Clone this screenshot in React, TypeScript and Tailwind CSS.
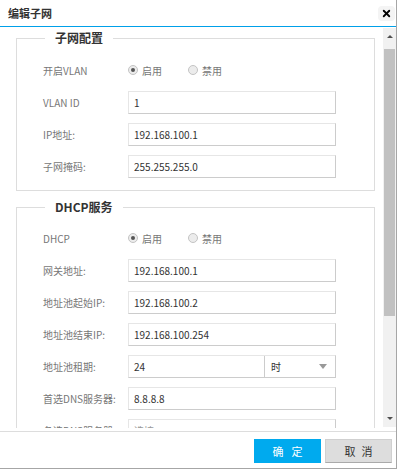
import React from 'react'
import { X } from 'lucide-react'

function Radio({ checked, label }: { checked?: boolean; label: string }) {
  return (
    <label className="inline-flex w-[60px] items-center gap-[4px] text-[#777]">
      <span className="flex h-[10px] w-[10px] items-center justify-center rounded-full border border-[#c4c4c4] bg-[#ececec]">
        {checked && <span className="h-[4px] w-[4px] rounded-full bg-[#555]" />}
      </span>
      {label}
    </label>
  )
}

function Field({ value, placeholder }: { value?: string; placeholder?: string }) {
  return (
    <input
      readOnly
      defaultValue={value}
      placeholder={placeholder}
      className="h-[23px] w-[208px] border border-[#cccccc] border-t-[#e6e6e6] border-l-[#e6e6e6] bg-white px-[5px] text-[10px] text-[#333] outline-none placeholder:text-[#999]"
    />
  )
}

function Row({ label, children }: { label: string; children: React.ReactNode }) {
  return (
    <div className="flex h-8 items-center">
      <span className="w-[85px] shrink-0 text-[#777]">{label}</span>
      {children}
    </div>
  )
}

function Group({ title, children, className }: { title: string; children: React.ReactNode; className?: string }) {
  return (
    <fieldset className={`border border-[#dddddd] pb-2 ${className ?? ''}`}>
      <legend className="ml-[28px] px-[10px] text-[12px] leading-[20px] font-bold text-[#333]">{title}</legend>
      <div className="pl-[26px]">{children}</div>
    </fieldset>
  )
}

export default function App() {
  return (
    <div className="flex h-[469px] w-[397px] flex-col border-r border-b border-[#a6a6a6] bg-white font-['Noto_Sans_CJK_SC',sans-serif] text-[10px]">
      {/* Header */}
      <div className="flex h-[27px] shrink-0 items-center justify-between border-b border-[#00a0e9] pl-2 pr-[1px]">
        <span className="text-[11px] font-bold text-[#333]">编辑子网</span>
        <span className="flex h-[15px] w-[17px] items-center justify-center rounded-sm bg-[#f4f4f4]">
          <X size={11} strokeWidth={4} color="#000" />
        </span>
      </div>

      {/* Body */}
      <div className="flex h-[401px] shrink-0">
        <div className="flex-1 overflow-hidden pl-4 pr-2">
          <Group title="子网配置" className="mt-px">
            <div className="pt-[6px]">
              <Row label="开启VLAN">
                <Radio checked label="启用" />
                <Radio label="禁用" />
              </Row>
              <Row label="VLAN ID">
                <Field value="1" />
              </Row>
              <Row label="IP地址:">
                <Field value="192.168.100.1" />
              </Row>
              <Row label="子网掩码:">
                <Field value="255.255.255.0" />
              </Row>
            </div>
          </Group>

          <Group title="DHCP服务" className="mt-[6px]">
            <div className="pt-[5px]">
              <Row label="DHCP">
                <Radio checked label="启用" />
                <Radio label="禁用" />
              </Row>
              <Row label="网关地址:">
                <Field value="192.168.100.1" />
              </Row>
              <Row label="地址池起始IP:">
                <Field value="192.168.100.2" />
              </Row>
              <Row label="地址池结束IP:">
                <Field value="192.168.100.254" />
              </Row>
              <Row label="地址池租期:">
                <div className="flex h-[23px] w-[208px] border border-[#cccccc] border-t-[#e6e6e6] border-l-[#e6e6e6]">
                  <span className="flex w-[136px] items-center border-r border-[#cccccc] px-[5px] text-[#333]">24</span>
                  <span className="flex flex-1 items-center justify-between pl-[6px] pr-[8px] text-[#333]">
                    时
                    <span className="h-0 w-0 border-x-[4px] border-t-[5px] border-x-transparent border-t-[#999]" />
                  </span>
                </div>
              </Row>
              <Row label="首选DNS服务器:">
                <Field value="8.8.8.8" />
              </Row>
              <Row label="备选DNS服务器:">
                <Field placeholder="选填" />
              </Row>
            </div>
          </Group>
        </div>

        {/* Scrollbar */}
        <div className="mt-px flex h-[399px] w-[13px] shrink-0 flex-col bg-[#f1f1f1]">
          <div className="flex h-[17px] items-center justify-center">
            <span className="h-0 w-0 border-x-[3px] border-b-[3px] border-x-transparent border-b-[#505050]" />
          </div>
          <div className="h-[4px]" />
          <div className="mx-px h-[267px] bg-[#c1c1c1]" />
          <div className="flex-1" />
          <div className="flex h-[17px] items-center justify-center">
            <span className="h-0 w-0 border-x-[3px] border-t-[3px] border-x-transparent border-t-[#505050]" />
          </div>
        </div>
      </div>
      <div className="h-[3px] shrink-0" />

      {/* Footer */}
      <div className="flex flex-1 items-start justify-end gap-1 border-t border-[#dddddd] pt-[7px] pr-1">
        <button className="h-[24px] w-[67px] bg-[#00aaee] pl-[8px] text-[11px] tracking-[8px] text-white">确定</button>
        <button className="h-[24px] w-[67px] border border-[#d0d0d0] border-b-[#aaaaaa] bg-[#dddddd] pl-[6px] text-[11px] tracking-[6px] text-[#333]">取消</button>
      </div>
    </div>
  )
}
